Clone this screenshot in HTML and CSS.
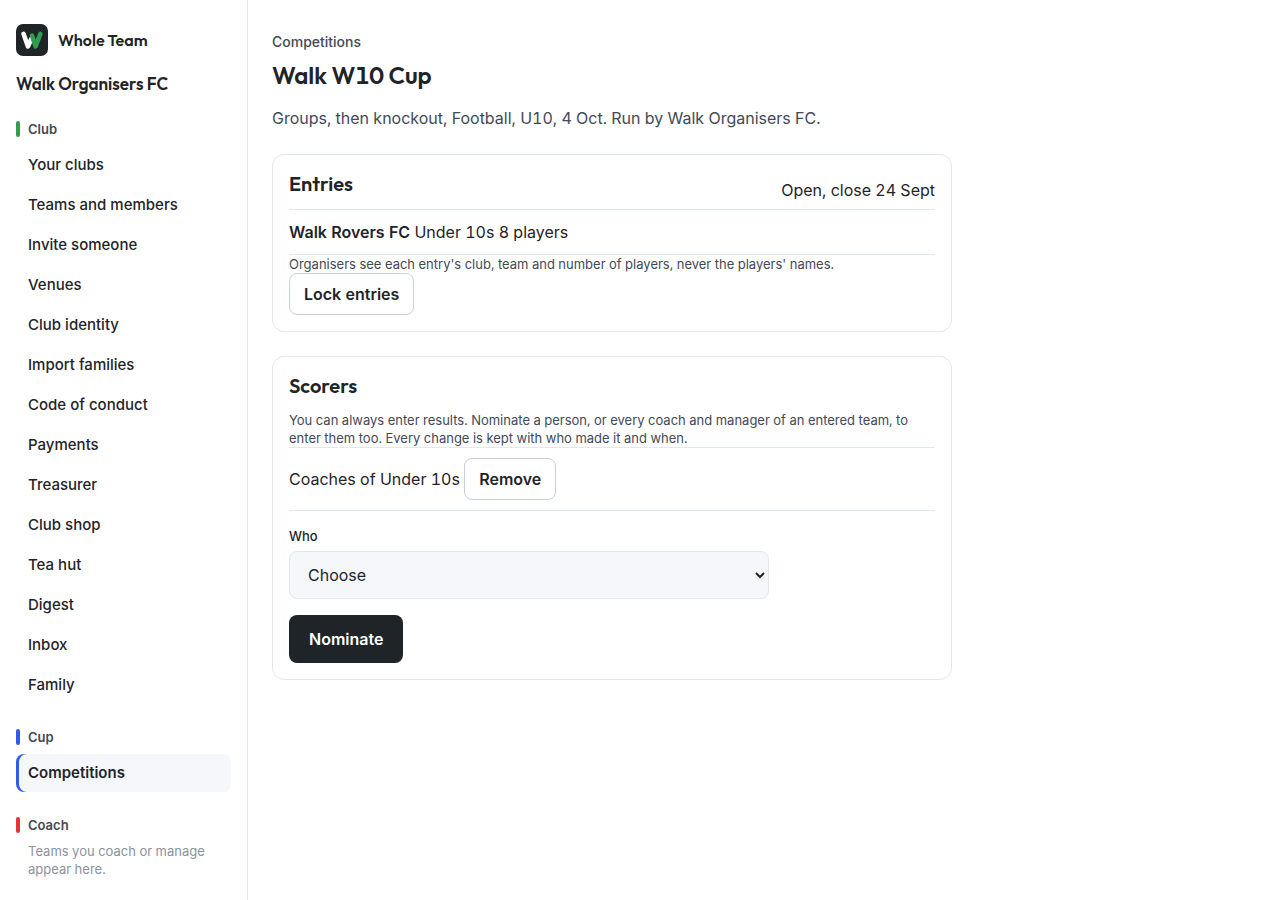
FILE: index.html
```html
<!DOCTYPE html>
<html lang="en-GB">
<head>
<meta charset="utf-8">
<meta name="viewport" content="width=device-width, initial-scale=1">
<title>Walk W10 Cup</title>
<link rel="stylesheet" href="styles.css">
</head>
<body>
<div class="shell">
  <aside class="sidebar">
    <a class="brand" href="#">
      <svg class="brand-mark" viewBox="0 0 32 32" aria-hidden="true">
        <rect width="32" height="32" rx="7" fill="#1f2428"/>
        <g fill="none" stroke-width="4.6" stroke-linecap="round" stroke-linejoin="round">
          <path d="M7.5 9.8 12 22.4 15.4 14.8" stroke="#fff"/>
          <path d="M16 11.6 19.6 22.4 24.4 9.8" stroke="#2f9e51"/>
        </g>
      </svg>
      <span class="brand-name">Whole Team</span>
    </a>
    <p class="club-name">Walk Organisers FC</p>
    <nav class="nav" aria-label="Main">
      <section class="group group-club">
        <h2 class="group-title">Club</h2>
        <ul class="links">
          <li><a class="link" href="#">Your clubs</a></li>
          <li><a class="link" href="#">Teams and members</a></li>
          <li><a class="link" href="#">Invite someone</a></li>
          <li><a class="link" href="#">Venues</a></li>
          <li><a class="link" href="#">Club identity</a></li>
          <li><a class="link" href="#">Import families</a></li>
          <li><a class="link" href="#">Code of conduct</a></li>
          <li><a class="link" href="#">Payments</a></li>
          <li><a class="link" href="#">Treasurer</a></li>
          <li><a class="link" href="#">Club shop</a></li>
          <li><a class="link" href="#">Tea hut</a></li>
          <li><a class="link" href="#">Digest</a></li>
          <li><a class="link" href="#">Inbox</a></li>
          <li><a class="link" href="#">Family</a></li>
        </ul>
      </section>
      <section class="group group-cup">
        <h2 class="group-title">Cup</h2>
        <ul class="links">
          <li><a class="link link-active" href="#" aria-current="page">Competitions</a></li>
        </ul>
      </section>
      <section class="group group-coach">
        <h2 class="group-title">Coach</h2>
        <p class="group-empty">Teams you coach or manage appear here.</p>
      </section>
    </nav>
  </aside>
  <main class="main">
    <a class="crumb" href="#">Competitions</a>
    <h1 class="title">Walk W10 Cup</h1>
    <p class="summary">Groups, then knockout, Football, U10, 4 Oct. Run by Walk Organisers FC.</p>

    <section class="card">
      <div class="card-head">
        <h2 class="card-title">Entries</h2>
        <span>Open, close 24 Sept</span>
      </div>
      <ul class="rows">
        <li class="row"><strong class="strong">Walk Rovers FC</strong> Under 10s 8 players</li>
      </ul>
      <p class="note">Organisers see each entry's club, team and number of players, never the players' names.</p>
      <button class="button" type="button">Lock entries</button>
    </section>

    <section class="card">
      <h2 class="card-title">Scorers</h2>
      <p class="note">You can always enter results. Nominate a person, or every coach and manager of an entered team, to enter them too. Every change is kept with who made it and when.</p>
      <ul class="rows">
        <li class="row">Coaches of Under 10s <button class="button" type="button">Remove</button></li>
      </ul>
      <form class="form">
        <div class="field">
          <label class="label" for="who">Who</label>
          <select class="select" id="who">
            <option>Choose</option>
          </select>
        </div>
        <button class="button-primary" type="button">Nominate</button>
      </form>
    </section>
  </main>
</div>
</body>
</html>
```
FILE: styles.css
```css
:root {
  --ink: #1f2428;
  --soft: #434956;
  --muted: #8b939c;
  --line: #e3e7ee;
  --line-strong: #c9cedb;
  --tint: #f5f7fb;
  --display: Outfit, Lato, sans-serif;
}

* {
  box-sizing: border-box;
}

body,
h1,
h2,
p,
ul {
  margin: 0;
}

body {
  background: #fff;
  color: var(--ink);
  font: 400 16px/24px Inter, sans-serif;
  font-variant-numeric: tabular-nums;
}

ul {
  padding: 0;
  list-style: none;
}

a {
  color: inherit;
  text-decoration: none;
}

.shell {
  display: grid;
  grid-template-columns: 248px minmax(0, 1fr);
  min-height: 100vh;
}

.sidebar {
  padding: 24px 16px 16px;
  border-right: 1px solid var(--line);
}

.brand {
  display: flex;
  align-items: center;
  gap: 10px;
}

.brand-mark {
  width: 32px;
  height: 32px;
}

.brand-name,
.club-name,
.title,
.card-title {
  font-family: var(--display);
  font-weight: 600;
}

.brand-name {
  font-size: 16px;
}

.club-name {
  margin: 16px 0 24px;
  font-size: 17px;
}

.nav {
  display: grid;
  gap: 24px;
}

.group-club {
  --accent: #2f9e51;
}

.group-cup {
  --accent: #2f5be7;
}

.group-coach {
  --accent: #e5343d;
}

.group-title {
  display: flex;
  align-items: center;
  gap: 8px;
  margin-bottom: 8px;
  color: var(--soft);
  font-size: 13px;
  font-weight: 600;
  line-height: 18px;
}

.group-title::before {
  width: 4px;
  height: 16px;
  border-radius: 2px;
  background: var(--accent);
  content: "";
}

.links {
  display: grid;
  gap: 2px;
}

.link {
  display: block;
  padding: 8px 12px;
  border-radius: 8px;
  font-size: 15px;
  font-weight: 500;
  line-height: 22px;
}

.link-active {
  background: var(--tint);
  box-shadow: inset 3px 0 0 var(--accent);
  font-weight: 600;
}

.group-empty {
  padding-left: 12px;
  color: var(--muted);
  font-size: 13px;
  line-height: 18px;
}

.main {
  max-width: 728px;
  padding: 32px 24px;
}

.crumb {
  display: block;
  color: var(--soft);
  font-size: 14px;
  font-weight: 500;
  line-height: 20px;
}

.title {
  margin: 8px 0 16px;
  font-size: 24px;
  line-height: 30px;
}

.summary {
  color: var(--soft);
}

.card {
  margin-top: 24px;
  padding: 16px;
  border: 1px solid var(--line);
  border-radius: 12px;
}

.card-head {
  display: flex;
  align-items: center;
  justify-content: space-between;
  gap: 16px;
}

.card-title {
  margin-bottom: 12px;
  font-size: 20px;
  line-height: 26px;
}

.rows {
  border-top: 1px solid var(--line);
}

.row {
  padding: 10px 0;
  border-bottom: 1px solid var(--line);
}

.strong {
  font-weight: 600;
}

.note {
  color: var(--soft);
  font-size: 13px;
  line-height: 18px;
}

.button {
  padding: 8px 14px;
  border: 1px solid var(--line-strong);
  border-radius: 8px;
  background: #fff;
  color: var(--ink);
  font: inherit;
  font-weight: 600;
}

.form {
  display: grid;
  justify-items: start;
  gap: 16px;
  padding-top: 16px;
}

.field {
  display: grid;
  gap: 6px;
  width: 100%;
  max-width: 480px;
}

.label {
  font-size: 13px;
  font-weight: 500;
  line-height: 18px;
}

.select {
  width: 100%;
  height: 48px;
  padding: 0 0 0 14px;
  border: 1px solid var(--line);
  border-radius: 8px;
  background-color: var(--tint);
  color: var(--ink);
  font: inherit;
}

.button,
.button-primary {
  cursor: pointer;
}

.button-primary {
  padding: 12px 20px;
  border: 0;
  border-radius: 8px;
  background: var(--ink);
  color: #fff;
  font: inherit;
  font-weight: 600;
}
```
